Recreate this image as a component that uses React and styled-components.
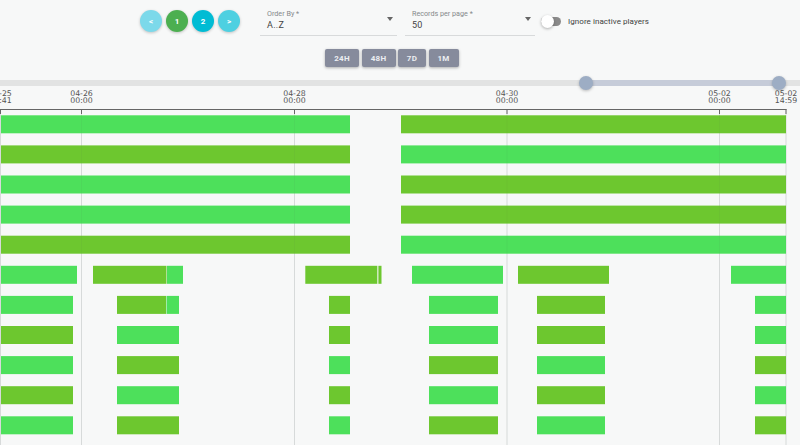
import React from "react";
import styled, { createGlobalStyle } from "styled-components";

const Global = createGlobalStyle`
  html, body { margin: 0; padding: 0; background: #f7f8f8; overflow: hidden; }
  body { font-family: Roboto, "Liberation Sans", sans-serif; }
`;
const Page = styled.div`
  width: 800px; height: 445px; display: flex; flex-direction: column; overflow: hidden;
`;
const Toolbar = styled.div`
  display: flex; height: 40px; box-sizing: border-box; padding: 8px 0 0 140px; align-items: flex-start; flex: none;
`;
const Pager = styled.div`
  display: flex; gap: 4px; margin: 2px 20px 0 0;
`;
const PageBtn = styled.button`
  width: 22px; height: 22px; border-radius: 50%; border: 0; padding: 0;
  background: ${(p) => p.$bg}; color: #fff; font: 700 8px Roboto, sans-serif;
  box-shadow: 0 1px 3px rgba(0,0,0,.22);
`;
const Field = styled.div`
  width: ${(p) => p.$w}px; height: 28px; margin-right: ${(p) => p.$mr}px;
  border-bottom: 1px solid #d8dadb; padding-left: 7px; box-sizing: border-box;
  position: relative; flex: none;
`;
const FieldLabel = styled.div`
  font-size: 7.2px; line-height: 9px; color: #85898b; margin-top: 1px;
`;
const FieldValue = styled.div`
  font-size: 9px; line-height: 12px; letter-spacing: .3px; color: #444; margin-top: 1px;
`;
const Caret = styled.span`
  position: absolute; right: 4.5px; top: 9px; width: 0; height: 0;
  border-left: 3.5px solid transparent; border-right: 3.5px solid transparent;
  border-top: 4px solid #666;
`;
const SwitchWrap = styled.div`
  display: flex; align-items: center; margin-top: 9px; gap: 7px;
`;
const Track = styled.div`
  width: 20px; height: 9px; border-radius: 5px; background: #8a8a8a; position: relative;
`;
const Thumb = styled.span`
  position: absolute; left: 0; top: -2px; width: 13px; height: 13px; border-radius: 50%;
  background: #fff; box-shadow: 0 1px 3px rgba(0,0,0,.3);
`;
const SwitchLabel = styled.span`
  font-size: 8px; letter-spacing: .06px; color: #3d3f41;
`;
const Ranges = styled.div`
  display: flex; gap: 2.5px; flex: none; height: 18px; margin-top: 9px; padding-left: 325px;
`;
const RangeBtn = styled.button`
  width: ${(p) => p.$w}px; height: 18px; border: 0; border-radius: 2px; padding: 0;
  background: #868b9c; color: #eceef2; font: 700 8px Roboto, sans-serif; letter-spacing: .3px;
  box-shadow: 0 1px 3px rgba(0,0,0,.3);
`;
const Slider = styled.div`
  position: relative; height: 6px; margin-top: 13px; flex: none; background: #e2e3e3;
`;
const SliderActive = styled.div`
  position: absolute; left: 586px; right: 21px; top: 0; bottom: 0; background: #c6ccd9;
`;
const Knob = styled.span`
  position: absolute; top: -4px; left: ${(p) => p.$x - 7}px; width: 14px; height: 14px; border-radius: 50%;
  background: #9dadc4; box-shadow: 0 1px 3px rgba(0,0,0,.25);
`;
const Chart = styled.svg`
  display: block; flex: none; font-family: "DejaVu Sans", sans-serif;
`;

const B = "#4de05b";
const D = "#6dc72f";
const Y = (i) => 115.3 + i * 30.1;
const top = (l, r) => [[1, 350, l], [401, 786, r]];
const six = (a, b, c, d, e, f) => [
  [1, 73, a], [117, 179, b], [329, 350, c], [429, 498, d], [537, 605, e], [755, 786, f],
];
const rows = [
  top(B, D), top(D, B), top(B, D), top(B, D), top(D, B),
  [[1, 77, B], [93, 166.5, D], [167, 183, B], [305.3, 377.3, D], [378.4, 381.5, D], [412, 503, B], [518, 609, D], [731, 786, B]],
  [[1, 73, B], [117, 166, D], [166.5, 179, B], [329, 350, D], [429, 498, B], [537, 605, D], [755, 786, B]],
  six(D, B, D, B, D, B),
  six(B, D, B, D, B, D),
  six(D, B, D, B, D, B),
  six(B, D, B, D, B, D),
];
const ticks = [
  { x: 81.5, a: "04-26", b: "00:00" },
  { x: 294.5, a: "04-28", b: "00:00" },
  { x: 507, a: "04-30", b: "00:00" },
  { x: 719.5, a: "05-02", b: "00:00" },
  { x: 786, a: "05-02", b: "14:59" },
  { x: 0.5, a: "04-25", b: "20:41" },
];

export default function App() {
  return (
    <Page>
      <Global />
      <Toolbar>
        <Pager>
          <PageBtn $bg="#7cd9ea">&lt;</PageBtn>
          <PageBtn $bg="#4caf50">1</PageBtn>
          <PageBtn $bg="#00bcd4">2</PageBtn>
          <PageBtn $bg="#4dd0e1">&gt;</PageBtn>
        </Pager>
        <Field $w={137} $mr={8}>
          <FieldLabel>Order By *</FieldLabel>
          <FieldValue>A..Z</FieldValue>
          <Caret />
        </Field>
        <Field $w={130} $mr={6}>
          <FieldLabel>Records per page *</FieldLabel>
          <FieldValue>50</FieldValue>
          <Caret />
        </Field>
        <SwitchWrap>
          <Track><Thumb /></Track>
          <SwitchLabel>Ignore inactive players</SwitchLabel>
        </SwitchWrap>
      </Toolbar>
      <Ranges>
        <RangeBtn $w={34}>24H</RangeBtn>
        <RangeBtn $w={34}>48H</RangeBtn>
        <RangeBtn $w={28}>7D</RangeBtn>
        <RangeBtn $w={30}>1M</RangeBtn>
      </Ranges>
      <Slider>
        <SliderActive />
        <Knob $x={586} />
        <Knob $x={779} />
      </Slider>
      <Chart width="800" height="359" viewBox="0 86 800 359">
        {ticks.map((t) => (
          <g key={t.x}>
            <line x1={t.x} x2={t.x} y1="110" y2="445" stroke="#e0e2e3" strokeWidth="1" />
            <line x1={t.x} x2={t.x} y1="109" y2="114" stroke="#666" strokeWidth="1" />
            <text x={t.x} y="95.5" textAnchor="middle" fontSize="7.8" fill="#555">{t.a}</text>
            <text x={t.x} y="103" textAnchor="middle" fontSize="7.8" fill="#555">{t.b}</text>
          </g>
        ))}
        <line x1="0" x2="786.5" y1="109.5" y2="109.5" stroke="#666" strokeWidth="1" />
        {rows.map((segs, i) =>
          segs.map(([a, b, c]) => (
            <rect key={`${i}-${a}`} x={a} y={Y(i)} width={b - a} height="18" fill={c} />
          ))
        )}
        {ticks.map((t) => (
          <line key={t.x} x1={t.x} x2={t.x} y1="115" y2="445" stroke="rgba(90,100,90,.06)" strokeWidth="1" />
        ))}
      </Chart>
    </Page>
  );
}
